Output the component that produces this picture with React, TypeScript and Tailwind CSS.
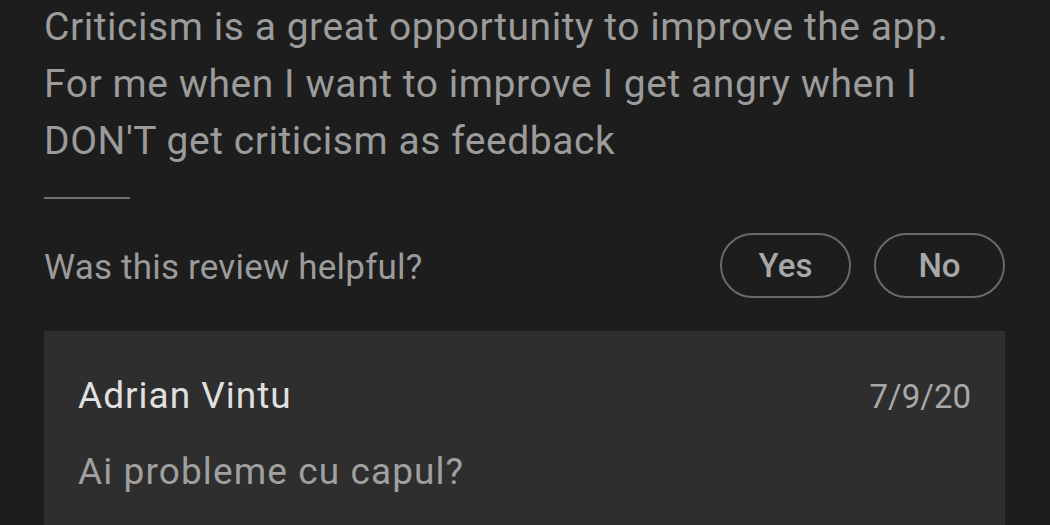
export default function App() {
  return (
    <div
      className="w-[1050px] h-[525px] overflow-hidden bg-[#1d1d1d]"
      style={{ fontFamily: 'Roboto, "Noto Sans", sans-serif' }}
    >
      <div className="pl-[44px] pr-[45px]">
        <p className="text-[39px] leading-[57px] tracking-[0.55px] text-[#9b9b9b] -mt-[1px]">
          Criticism is a great opportunity to improve the app.
          <br />
          For me when I want to improve I get angry when I
          <br />
          DON'T get criticism as feedback
        </p>
        <div className="mt-[27px] w-[86px] h-[2px] bg-[#6f6f6f]" />
        <div className="mt-[34px] flex items-center justify-between">
          <span className="pt-[5px] text-[35px] leading-[52px] tracking-[0.2px] text-[#9b9b9b]">
            Was this review helpful?
          </span>
          <div className="flex gap-[23px]">
            <button className="w-[131px] h-[65px] rounded-full border-2 border-[#6a6a6a] text-[33px] font-medium text-[#a8a8a8]">
              Yes
            </button>
            <button className="w-[131px] h-[65px] rounded-full border-2 border-[#6a6a6a] text-[33px] font-medium text-[#a8a8a8]">
              No
            </button>
          </div>
        </div>
        <div className="mt-[33px] bg-[#2e2e2e] px-[34px] pt-[43px] pb-[40px]">
          <div className="flex items-baseline justify-between">
            <span className="text-[37px] leading-[44px] tracking-[1px] text-[#e0e0e0]">Adrian Vintu</span>
            <span className="text-[33px] leading-[44px] text-[#a8a8a8]">7/9/20</span>
          </div>
          <p className="mt-[31px] text-[37px] leading-[44px] tracking-[1.1px] text-[#a0a0a0]">
            Ai probleme cu capul?
          </p>
        </div>
      </div>
    </div>
  );
}
